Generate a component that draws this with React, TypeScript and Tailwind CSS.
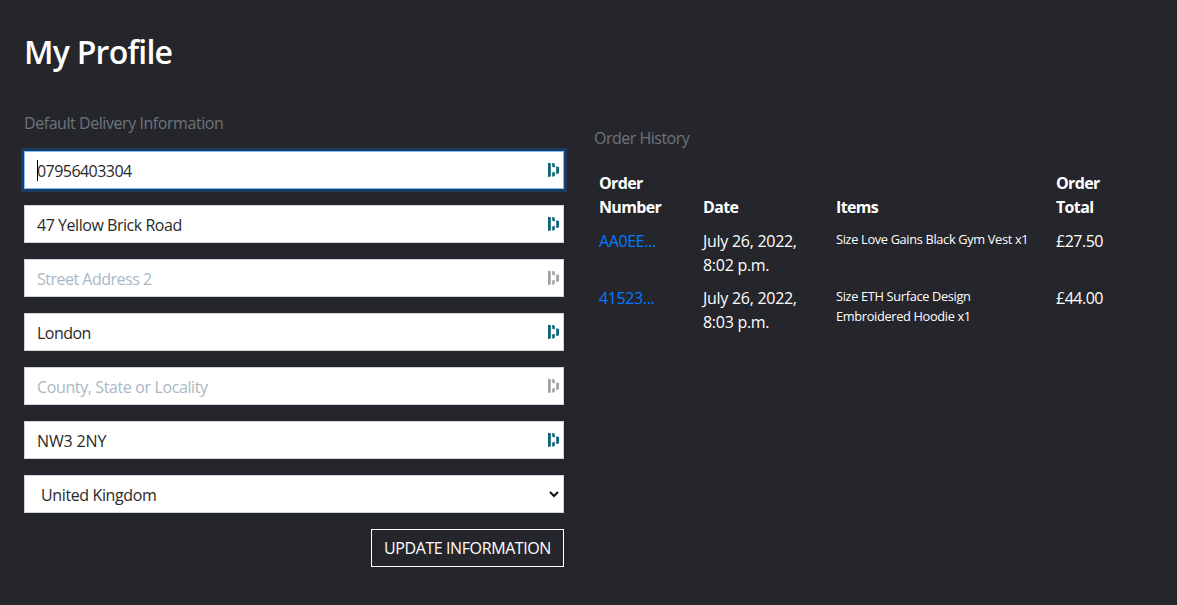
import React from "react";
import clsx from "clsx";

type Field = { label: string; value: string; tracking: string; focused?: boolean };

const fields: Field[] = [
  { label: "Phone Number", value: "07956403304", tracking: "tracking-[-0.55px]", focused: true },
  { label: "Street Address 1", value: "47 Yellow Brick Road", tracking: "tracking-[-0.46px]" },
  { label: "Street Address 2", value: "", tracking: "placeholder:tracking-[-0.5px]" },
  { label: "Town or City", value: "London", tracking: "tracking-[-0.55px]" },
  { label: "County, State or Locality", value: "", tracking: "placeholder:tracking-[-0.38px]" },
  { label: "Postal Code", value: "NW3 2NY", tracking: "tracking-[-0.15px]" },
];

const orders = [
  { number: "AA0EE...", date: "July 26, 2022,", time: "8:02 p.m.", items: ["Size Love Gains Black Gym Vest x1"], total: "£27.50" },
  { number: "41523...", date: "July 26, 2022,", time: "8:03 p.m.", items: ["Size ETH Surface Design", "Embroidered Hoodie x1"], total: "£44.00" },
];

function AutofillIcon({ muted }: { muted: boolean }) {
  return (
    <svg
      className={clsx("pointer-events-none absolute top-[11px] right-1 h-4 w-3", muted ? "text-[#a5a2a0]" : "text-[#0e6475]")}
      viewBox="0 0 12 16"
      fill="currentColor"
    >
      <path d="M0 .8 2.8 1.2V14.6L0 15Z M4.2 .8 6.8 1.7V5.4L4.2 4.8Z M4.2 10.4 6.8 9.8V14L4.2 14.8Z M8.2 4.3 11 5.1V11.3L8.2 12.2Z" />
    </svg>
  );
}

function ProfileField({ field }: { field: Field }) {
  return (
    <div className="relative h-[38px]">
      <input
        aria-label={field.label}
        placeholder={field.label}
        defaultValue={field.value}
        className={clsx(
          "block h-[38px] w-full border bg-white px-3 pt-0.5 text-base text-[#2a2a2a] outline-none placeholder:text-[#aab7c4]",
          field.tracking,
          field.focused ? "border-[#80bdff] shadow-[0_0_0_3px_#1b3b61]" : "border-[#ced4da]",
        )}
      />
      {field.focused && <span className="absolute top-[9px] left-[13px] h-[21px] w-px bg-black" />}
      <AutofillIcon muted={!field.value} />
    </div>
  );
}

export default function App() {
  return (
    <main className="h-[605px] overflow-hidden bg-[#25262b] pt-[15px] pr-[43px] pl-6 font-['Open_Sans',sans-serif] text-base leading-6 text-white">
      <hr className="border-[#212226]" />
      <h1 className="flex h-[78px] items-center pb-[6px] text-[32px] font-semibold tracking-[-0.75px]">My Profile</h1>
      <hr className="border-[#212226]" />
      <div className="grid grid-cols-[540px_540px] gap-x-[30px]">
        <section className="pt-4">
          <p className="mb-4 h-6 text-[#6c757d] tracking-[-0.44px]">Default Delivery Information</p>
          <form className="flex flex-col gap-4">
            {fields.map((field) => (
              <ProfileField key={field.label} field={field} />
            ))}
            <div className="relative h-[38px]">
              <select
                aria-label="Country"
                className="block h-[38px] w-full appearance-none border border-[#ced4da] bg-white px-4 pt-0.5 text-[#2a2a2a] tracking-[-0.38px] outline-none"
              >
                <option>United Kingdom</option>
              </select>
              <svg className="pointer-events-none absolute top-4 right-[5px] h-[7px] w-[10px]" viewBox="0 0 10 7" fill="none">
                <path d="M1 1 5 5 9 1" stroke="#101010" strokeWidth="2" />
              </svg>
            </div>
            <button type="button" className="h-[38px] w-[193px] self-end border border-white whitespace-nowrap tracking-[-0.4px]">
              UPDATE INFORMATION
            </button>
          </form>
        </section>
        <section className="pt-[31px]">
          <p className="h-6 text-[#6c757d] tracking-[-0.5px]">Order History</p>
          <table className="mt-4 w-full table-fixed border-collapse text-left">
            <colgroup>
              <col className="w-[104px]" />
              <col className="w-[133px]" />
              <col className="w-[220px]" />
              <col className="w-[83px]" />
            </colgroup>
            <thead>
              <tr className="h-[57px] align-bottom font-bold tracking-[-0.65px]">
                <th className="px-[5px] pb-1">Order<br />Number</th>
                <th className="px-[5px] pb-1">Date</th>
                <th className="px-[5px] pb-1">Items</th>
                <th className="px-[5px] pb-1">Order<br />Total</th>
              </tr>
            </thead>
            <tbody>
              {orders.map((order) => (
                <tr key={order.number} className="h-[57px] align-top">
                  <td className="px-[5px] pt-1.5 text-[#007bff] tracking-[-0.38px]">{order.number}</td>
                  <td className="px-[5px] pt-1.5 pb-[3px] whitespace-nowrap tracking-[-0.28px]">{order.date}<br />{order.time}</td>
                  <td className="px-[5px] pt-1.5 text-[12.8px] leading-5 whitespace-nowrap tracking-[-0.34px]">
                    {order.items.map((line) => <div key={line}>{line}</div>)}
                  </td>
                  <td className="px-[5px] pt-1.5 tracking-[-0.5px]">{order.total}</td>
                </tr>
              ))}
            </tbody>
          </table>
        </section>
      </div>
    </main>
  );
}
